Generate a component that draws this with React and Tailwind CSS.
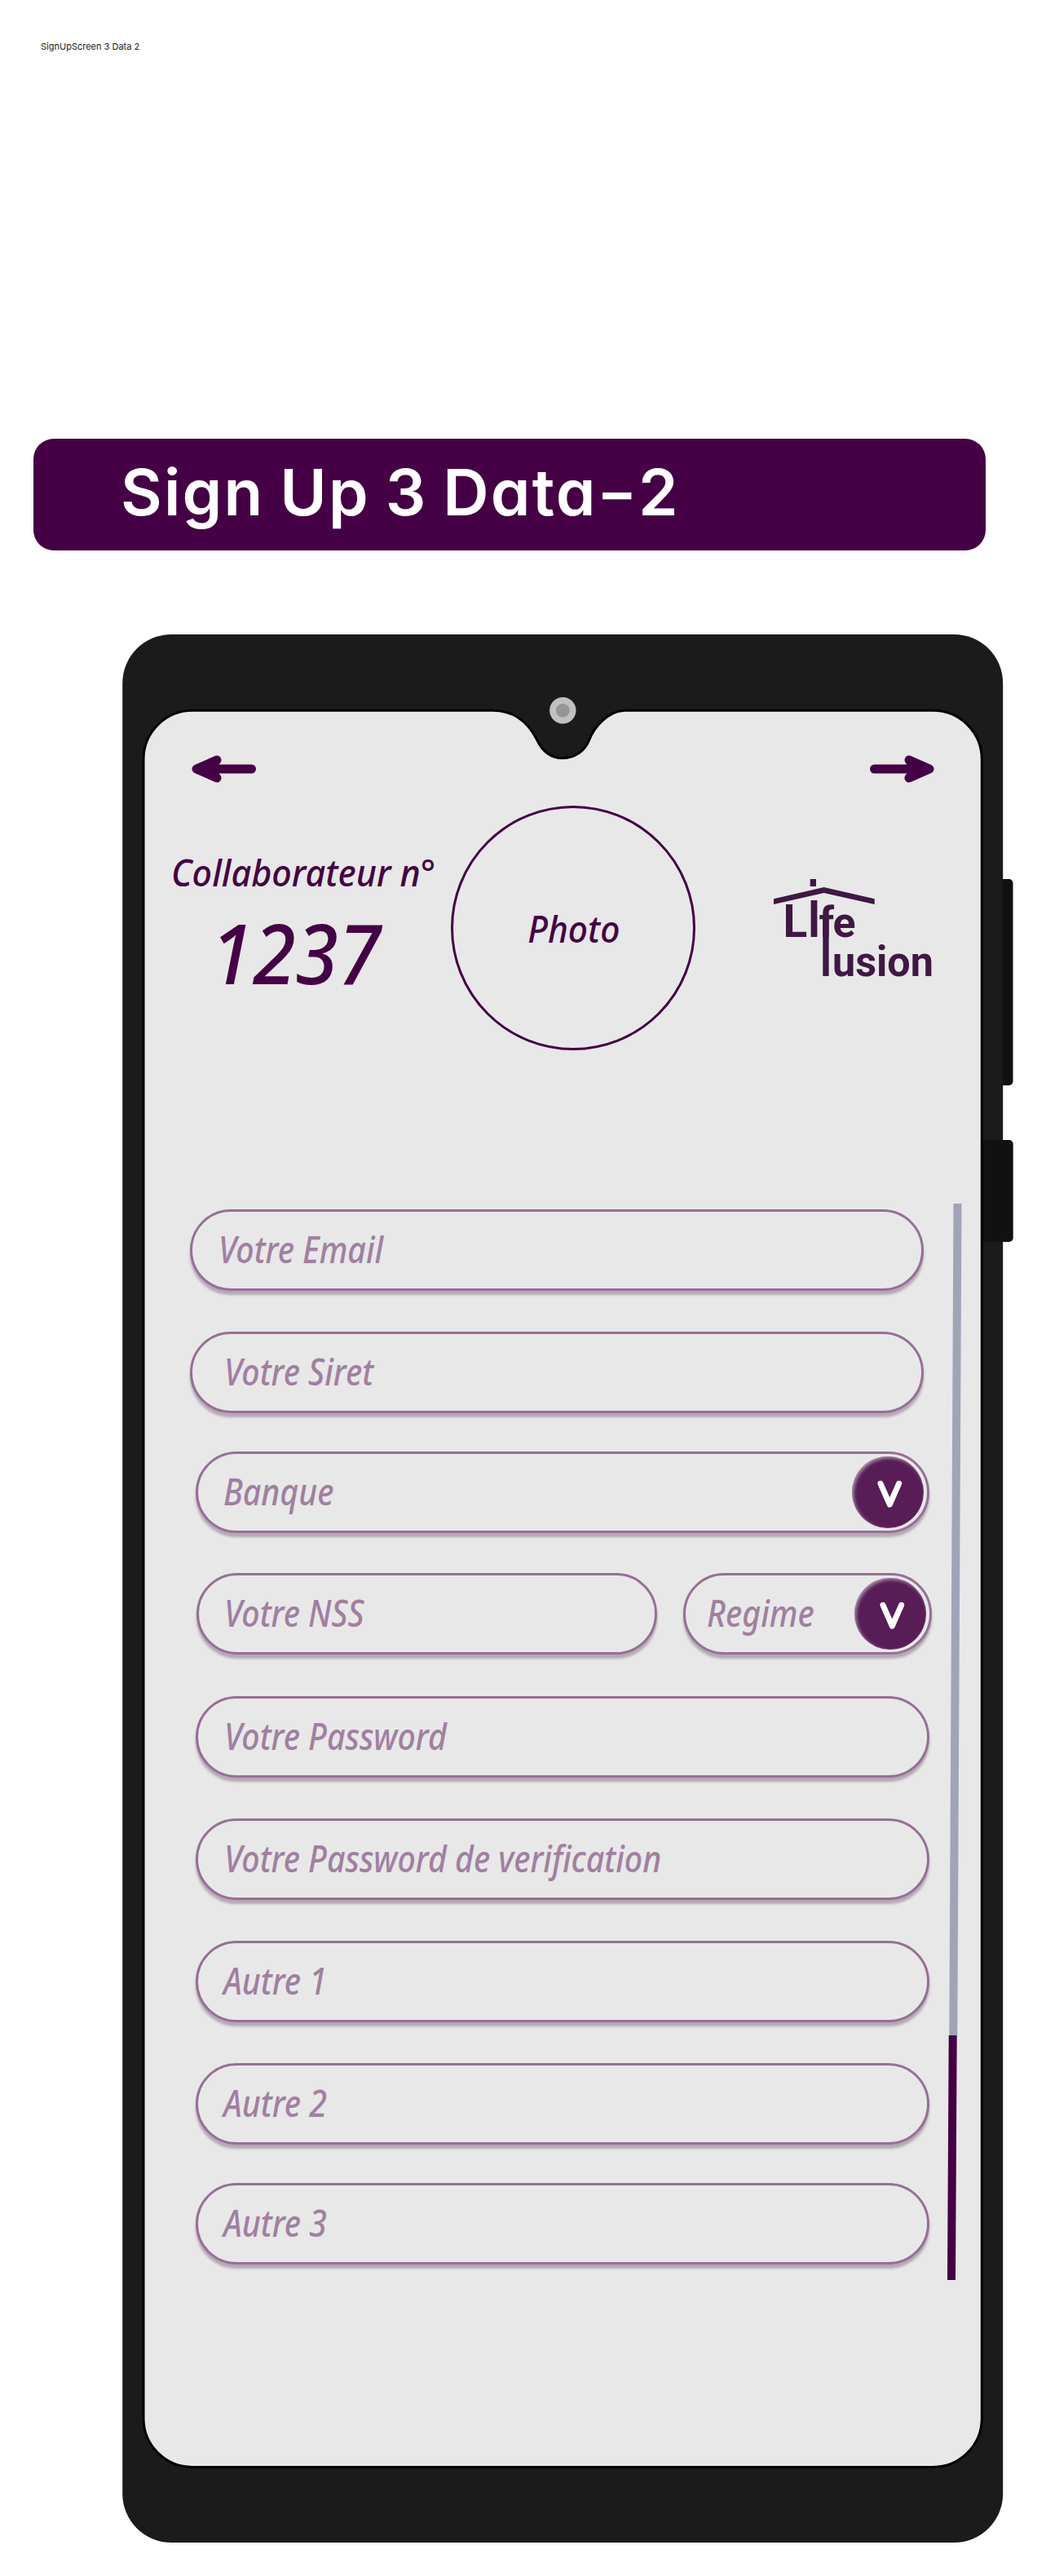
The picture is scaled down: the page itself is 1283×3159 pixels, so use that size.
const INK = "#450045";

const fields = [
  { id: "email", label: "Votre Email", gap: "mt-0", box: "ml-[56px] w-[900px]", pad: "pl-[32px]" },
  { id: "siret", label: "Votre Siret", gap: "mt-[50px]", box: "ml-[56px] w-[900px]", pad: "pl-[39px]" },
  { id: "banque", label: "Banque", gap: "mt-[47px]", box: "ml-[63px] w-[900px]", pad: "pl-[31px]", select: "right-[4px]" },
  { id: "nss", pair: true, gap: "mt-[49px]" },
  { id: "password", label: "Votre Password", gap: "mt-[51px]", box: "ml-[63px] w-[900px]", pad: "pl-[32px]" },
  { id: "verify", label: "Votre Password de verification", gap: "mt-[50px]", box: "ml-[63px] w-[900px]", pad: "pl-[32px]" },
  { id: "autre1", label: "Autre 1", gap: "mt-[50px]", box: "ml-[63px] w-[900px]", pad: "pl-[31px]" },
  { id: "autre2", label: "Autre 2", gap: "mt-[50px]", box: "ml-[63px] w-[900px]", pad: "pl-[31px]" },
  { id: "autre3", label: "Autre 3", gap: "mt-[47px]", box: "ml-[63px] w-[900px]", pad: "pl-[31px]" },
];

function SelectButton({ place }) {
  return (
    <button
      aria-label="Ouvrir la liste"
      className={`absolute top-[3px] size-[88px] rounded-full bg-[#581c57] shadow-[inset_2px_2px_4px_rgba(232,232,232,0.6)] ${place}`}
    >
      <svg viewBox="0 0 88 88" className="size-full" fill="none" stroke="#fff" strokeWidth="7" strokeLinecap="round" strokeLinejoin="round">
        <path d="M35 33.3 L46.3 59 L57.6 33.3" />
      </svg>
    </button>
  );
}

function Field({ label, box, pad, select }) {
  return (
    <div
      className={`relative flex h-[100px] shrink-0 items-center rounded-full border-3 border-[#966f96] bg-[#e8e8e8] shadow-[0_5px_3px_rgba(84,50,84,0.35)] ${box} ${pad}`}
    >
      <span className="relative -top-[2px] origin-left scale-x-[0.872] whitespace-nowrap text-[45px] leading-none font-medium italic text-[#a080a0]">{label}</span>
      {select && <SelectButton place={select} />}
    </div>
  );
}

function Arrow({ className }) {
  return (
    <svg viewBox="0 0 80 34" className={`h-[34px] w-[80px] ${className}`} fill={INK} stroke={INK} strokeWidth="11" strokeLinecap="round" strokeLinejoin="round">
      <path d="M31 6 L6 17 L31 28 L22 17 Z" />
      <path d="M12 17 H73.5" />
    </svg>
  );
}

function Logo() {
  return (
    <svg viewBox="0 0 200 140" className="h-[140px] w-[200px] font-['Roboto'] font-bold" fill="#3f1843">
      <path d="M0 24.3 L61.7 10 L123.7 24.3 V31 L61.7 17 L0 31 Z" />
      <rect x="44.7" y="0" width="7.3" height="9" />
      <text x="11.5" y="70.5" fontSize="55">L</text>
      <text x="40.6" y="70.5" fontSize="63.5" fontWeight="500">I</text>
      <text x="55.5" y="70.5" fontSize="52">f</text>
      <rect x="60.3" y="48" width="7.3" height="71" />
      <text x="72.5" y="70.5" fontSize="52" textLength="28" lengthAdjust="spacingAndGlyphs">e</text>
      <text x="72" y="119" fontSize="52" textLength="124" lengthAdjust="spacingAndGlyphs">usion</text>
    </svg>
  );
}

function PhoneFrame() {
  return (
    <svg viewBox="150 778 1093 2340" className="absolute top-0 left-0 h-[2340px] w-[1093px]" aria-hidden="true">
      <rect x="1200" y="1078" width="42.5" height="253" rx="5" fill="#111" />
      <rect x="150.2" y="778" width="1080" height="2340" rx="60" fill="#1b1b1b" />
      <rect x="1190" y="1398" width="52.7" height="125" rx="5" fill="#111" />
      <path
        d="M236 871.3 H604 C630 871.3 648 886 658.5 907 C665 921 676 929.7 690.3 929.7 C705 929.7 717 921 722 909 C729 890 747 871.3 767 871.3 H1144.3 A60 60 0 0 1 1204.3 931.3 V2965.5 A60 60 0 0 1 1144.3 3025.5 H236 A60 60 0 0 1 176 2965.5 V931.3 A60 60 0 0 1 236 871.3 Z"
        fill="#e8e8e8"
        stroke="#000"
        strokeWidth="3"
      />
      <circle cx="690.3" cy="871.3" r="16.2" fill="#c0c0c0" />
      <circle cx="690.3" cy="871.3" r="8.4" fill="#969696" />
    </svg>
  );
}

function ScrollTrack() {
  return (
    <svg viewBox="0 0 20 1320" className="absolute top-[698px] right-[61px] h-[1320px] w-[20px]" aria-hidden="true">
      <path d="M7.5 0 H17.5 L12.3 1020 H2.3 Z" fill="#a1a4b8" />
      <path d="M1.7 1020 H11.7 L10 1320 H0 Z" fill={INK} />
    </svg>
  );
}

export default function App() {
  return (
    <main className="flex h-[3159px] w-[1283px] flex-col overflow-hidden bg-white text-[#450045] font-['Noto_Sans',sans-serif]">
      <p className="mt-[49px] ml-[50px] h-[16px] font-['Inter',sans-serif] text-[11px] leading-[16px] text-[#1a1a1a]">SignUpScreen 3 Data 2</p>

      <header className="mt-[473px] ml-[41px] flex h-[137px] w-[1168px] shrink-0 items-center rounded-[25px] bg-[#450045] pl-[107px]">
        <h1 className="relative -top-[3px] whitespace-nowrap font-['Inter',sans-serif] text-[78px] leading-none font-semibold tracking-[2.2px] [word-spacing:-3px] text-white [font-feature-settings:'cv11']">
          Sign Up 3 Data<span className="mx-[6px] inline-block scale-x-[1.38]">-</span>2
        </h1>
      </header>

      <section className="relative mt-[103px] ml-[150px] h-[2340px] w-[1093px] shrink-0">
        <PhoneFrame />
        <div className="relative ml-[27px] flex h-full w-[1026px] flex-col pt-[148px]">
          <nav className="flex h-[34px] justify-between pr-[57px] pl-[58px]">
            <Arrow className="" />
            <Arrow className="-scale-x-100" />
          </nav>

          <div className="mt-[28px] flex h-[300px]">
            <div className="flex w-[376px] flex-col items-start pl-[33px] whitespace-nowrap italic">
              <p className="mt-[57px] origin-left scale-x-[0.957] text-[45px] leading-[50px] font-medium">Collaborateur n°</p>
              <p className="mt-[18px] ml-[48px] origin-left scale-x-[0.94] text-[101px] leading-[110px] font-medium">1237</p>
            </div>
            <div className="flex size-[300px] shrink-0 items-center justify-center rounded-full border-3 border-[#450045]">
              <span className="relative left-[1px] scale-x-[0.945] text-[45px] leading-none font-medium italic">Photo</span>
            </div>
            <div className="mt-[90px] ml-[96px]">
              <Logo />
            </div>
          </div>

          <form className="mt-[195px] flex flex-col">
            {fields.map((f) => (
              <div key={f.id} className={`flex ${f.gap}`}>
                {f.pair ? (
                  <>
                    <Field label="Votre NSS" box="ml-[64px] w-[565px]" pad="pl-[31px]" />
                    <Field label="Regime" box="ml-[32px] w-[305px]" pad="pl-[26px]" select="right-[4px]" />
                  </>
                ) : (
                  <Field {...f} />
                )}
              </div>
            ))}
          </form>
        </div>
        <ScrollTrack />
      </section>
    </main>
  );
}
